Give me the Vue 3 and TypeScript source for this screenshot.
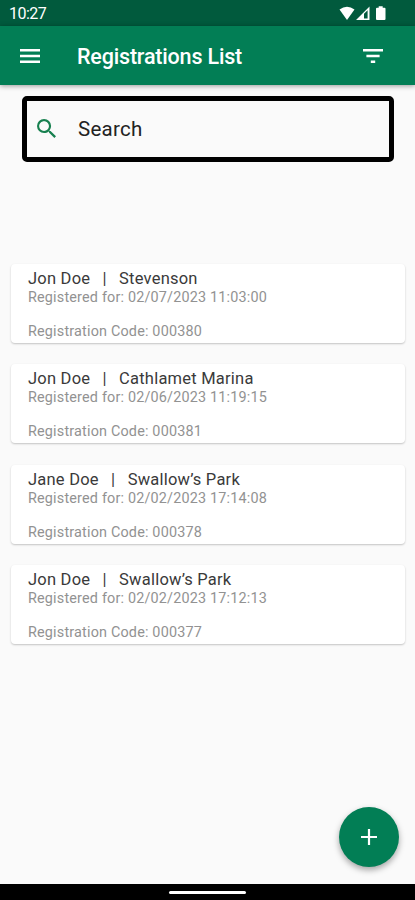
<script setup lang="ts">
interface Registration {
  name: string
  place: string
  date: string
  code: string
}

const registrations: Registration[] = [
  { name: 'Jon Doe', place: 'Stevenson', date: '02/07/2023 11:03:00', code: '000380' },
  { name: 'Jon Doe', place: 'Cathlamet Marina', date: '02/06/2023 11:19:15', code: '000381' },
  { name: 'Jane Doe', place: 'Swallow’s Park', date: '02/02/2023 17:14:08', code: '000378' },
  { name: 'Jon Doe', place: 'Swallow’s Park', date: '02/02/2023 17:12:13', code: '000377' },
]
</script>

<template>
  <div class="screen">
    <div class="status">
      <span class="clock">10:27</span>
      <svg class="status-icons" width="50" height="16" viewBox="0 0 50 16" fill="#fff">
        <path d="M0.5 3.6 Q8 -2 15.5 3.6 L8 14 Z" />
        <path fill-rule="evenodd" d="M17 14 L30.5 0.5 V14 Z M25 7.8 V12.6 H28.6 V4.2 Z" />
        <path d="M39.7 0.2 h4 v1.5 h1.8 a1 1 0 0 1 1 1 V13 a1 1 0 0 1 -1 1 H38 a1 1 0 0 1 -1 -1 V2.7 a1 1 0 0 1 1 -1 h1.7 Z" />
      </svg>
    </div>

    <header class="bar">
      <svg class="menu" width="20" height="14" viewBox="0 0 20 14" fill="#fff">
        <path d="M0 0h20v2.4H0zM0 5.8h20v2.4H0zM0 11.6h20V14H0z" />
      </svg>
      <h1>Registrations List</h1>
      <svg class="filter" width="20" height="14" viewBox="0 0 20 14" fill="#fff">
        <path d="M0 0h20v2.4H0zM3.4 5.8h13.2v2.4H3.4zM7.8 11.6h4.4V14H7.8z" />
      </svg>
    </header>

    <main>
      <label class="search">
        <svg width="19" height="19" viewBox="3 3 17.5 17.5" fill="#17804f">
          <path d="M15.5 14h-.79l-.28-.27A6.47 6.47 0 0 0 16 9.5 6.5 6.5 0 1 0 9.5 16c1.61 0 3.09-.59 4.23-1.57l.27.28v.79l5 4.99L20.49 19l-4.99-5zm-6 0C7.01 14 5 11.99 5 9.5S7.01 5 9.5 5 14 7.01 14 9.5 11.99 14 9.5 14z" />
        </svg>
        <span>Search</span>
      </label>

      <section class="list">
        <article v-for="r in registrations" :key="r.code" class="card">
          <h2><span>{{ r.name }}</span><span class="sep">|</span><span>{{ r.place }}</span></h2>
          <p>Registered for: {{ r.date }}</p>
          <p class="code">Registration Code: {{ r.code }}</p>
        </article>
      </section>
    </main>

    <button class="fab" aria-label="Add">
      <svg width="16" height="16" viewBox="0 0 16 16" fill="#fff">
        <path d="M6.9 0h2.2v6.9H16v2.2H9.1V16H6.9V9.1H0V6.9h6.9z" />
      </svg>
    </button>

    <footer class="nav"><i></i></footer>
  </div>
</template>

<style>
body {
  background: #fafafa;
}
</style>

<style scoped>
.screen {
  position: relative;
  display: flex;
  flex-direction: column;
  width: 415px;
  height: 900px;
  overflow: hidden;
  background: #fafafa;
  font-family: Roboto, sans-serif;
}
.status {
  display: flex;
  justify-content: space-between;
  flex: none;
  height: 26px;
  padding: 0 26px 0 9px;
  box-sizing: border-box;
  background: #015a3d;
  color: #fff;
}
.clock {
  font-size: 16px;
  line-height: 28px;
  letter-spacing: -0.5px;
}
.status-icons {
  margin-top: 6px;
}
.bar {
  display: flex;
  align-items: center;
  flex: none;
  height: 59px;
  padding: 0 32px 0 20px;
  box-sizing: border-box;
  background: #027e55;
  box-shadow: 0 1px 5px rgba(0, 0, 0, 0.4);
}
h1 {
  flex: 1;
  margin: 2px 0 0 37px;
  color: #fff;
  font-size: 21.5px;
  line-height: 28px;
  font-weight: 500;
  letter-spacing: -0.18px;
}
main {
  flex: 1;
  padding: 11px 10px 0 11px;
}
.search {
  display: flex;
  align-items: center;
  width: 372px;
  height: 66px;
  margin-left: 11px;
  padding: 0 0 1px 10px;
  box-sizing: border-box;
  border: 5px solid #000;
  border-radius: 5px;
  color: #222;
  font-size: 20.5px;
  letter-spacing: 0.25px;
}
.search span {
  margin-left: 22px;
}
.list {
  display: flex;
  flex-direction: column;
  gap: 21.4px;
  margin-top: 102px;
}
.card {
  height: 79px;
  padding: 5px 17px 0;
  box-sizing: border-box;
  border-radius: 4px;
  background: #fff;
  box-shadow: 0 1px 2px rgba(0, 0, 0, 0.22);
}
h2 {
  display: flex;
  margin: 0;
  color: #3a3a3a;
  font-size: 16.5px;
  line-height: 20px;
  font-weight: 400;
  letter-spacing: 0.22px;
}
.sep {
  margin: 0 12.3px;
}
p {
  margin: 0;
  color: #929292;
  font-size: 14.4px;
  line-height: 18px;
  letter-spacing: 0.18px;
}
.code {
  margin-top: 16px;
}
.fab {
  position: absolute;
  top: 807px;
  left: 339px;
  display: flex;
  align-items: center;
  justify-content: center;
  width: 60px;
  height: 60px;
  padding: 0;
  border: 0;
  border-radius: 50%;
  background: #027e55;
  box-shadow: 0 3px 6px rgba(0, 0, 0, 0.35);
}
.nav {
  display: flex;
  justify-content: center;
  flex: none;
  height: 16px;
  background: #000;
}
.nav i {
  width: 77px;
  height: 3px;
  margin-top: 7px;
  border-radius: 2px;
  background: #fff;
}
</style>
